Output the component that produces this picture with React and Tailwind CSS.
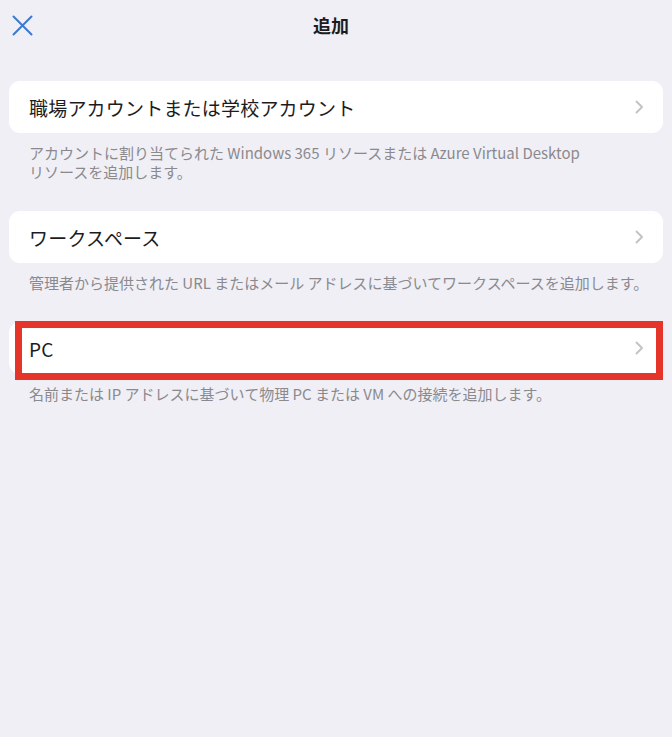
const font = { fontFamily: '"Noto Sans CJK JP", "Liberation Sans", sans-serif' };

const options = [
  {
    key: 'account',
    title: '職場アカウントまたは学校アカウント',
    desc: (
      <>
        アカウントに割り当てられた Windows 365 リソースまたは Azure Virtual Desktop
        <br />
        リソースを追加します。
      </>
    ),
  },
  {
    key: 'workspace',
    title: 'ワークスペース',
    desc: '管理者から提供された URL またはメール アドレスに基づいてワークスペースを追加します。',
  },
  {
    key: 'pc',
    title: 'PC',
    desc: '名前または IP アドレスに基づいて物理 PC または VM への接続を追加します。',
    highlight: true,
  },
];

const CloseIcon = () => (
  <svg width="21" height="21" viewBox="0 0 21 21" fill="none">
    <path d="M1.5 1.5 L19.5 19.5 M19.5 1.5 L1.5 19.5" stroke="#3b79d1" strokeWidth="2" strokeLinecap="round" />
  </svg>
);

const Chevron = () => (
  <svg width="9" height="14" viewBox="0 0 9 14" fill="none">
    <path d="M1.5 1.5 L7 7 L1.5 12.5" stroke="#c4c4c7" strokeWidth="2" strokeLinecap="round" strokeLinejoin="round" />
  </svg>
);

const App = () => {
  return (
    <div className="min-h-screen w-full bg-[#f0eff5] text-[#1c1c1e]" style={font}>
      {/* Header */}
      <div className="flex items-center h-[50px] px-[12px]">
        <div className="w-[60px] flex items-center">
          <CloseIcon />
        </div>
        <h1 className="flex-1 text-center text-[18px] font-bold leading-none pr-[70px]">追加</h1>
      </div>

      {/* Options */}
      <div className="mt-[31px] px-[9px] flex flex-col gap-[30px]">
        {options.map((opt) => (
          <div key={opt.key}>
            <div className="relative">
              <div className="h-[52px] bg-white rounded-[11px] flex items-center justify-between pl-[20px] pr-[19px]">
                <span className="text-[19px] leading-none tracking-[0.2px]">{opt.title}</span>
                <Chevron />
              </div>
              {opt.highlight && (
                <div className="absolute left-[6px] top-[-1px] w-[648px] h-[59px] border-[7px] border-[#e5342a]" />
              )}
            </div>
            <p className="pl-[20px] pt-[10px] text-[15px] leading-[19px] text-[#8a8a8e] whitespace-nowrap">
              {opt.desc}
            </p>
          </div>
        ))}
      </div>
    </div>
  );
};

export default App;
